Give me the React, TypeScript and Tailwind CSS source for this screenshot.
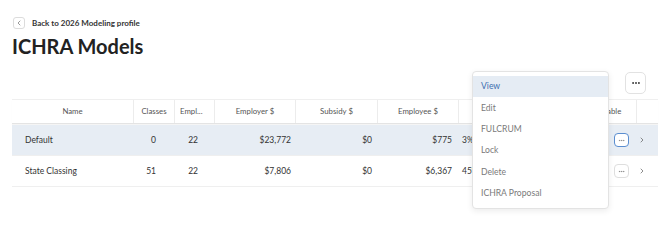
import React from 'react';
import { ChevronLeft, ChevronRight, MoreHorizontal } from 'lucide-react';

const cols = 'grid grid-cols-[121px_41px_40px_81px_82px_81px_60px_60px_58px_22px]';

const headers = [
  { label: 'Name', align: 'text-center' },
  { label: 'Classes', align: 'text-center' },
  { label: 'Empl...', align: 'text-left pl-[5px]' },
  { label: 'Employer $', align: 'text-center' },
  { label: 'Subsidy $', align: 'text-center' },
  { label: 'Employee $', align: 'text-center' },
  { label: 'EE %', align: 'text-center' },
  { label: 'Status', align: 'text-center' },
  { label: 'Editable', align: 'text-center' },
  { label: '', align: '' },
];

const rows = [
  { name: 'Default', classes: '0', empl: '22', employer: '$23,772', subsidy: '$0', employee: '$775', pct: '3%', active: true },
  { name: 'State Classing', classes: '51', empl: '22', employer: '$7,806', subsidy: '$0', employee: '$6,367', pct: '45%', active: false },
];

const menuItems = ['View', 'Edit', 'FULCRUM', 'Lock', 'Delete', 'ICHRA Proposal'];

export default function App() {
  return (
    <div className="relative w-[670px] h-[244px] bg-white px-3 pt-[17px] text-[#333]" style={{ fontFamily: 'Lato, "Noto Sans", sans-serif' }}>
      {/* Back link */}
      <div className="flex items-center gap-[7px]">
        <button className="h-3 w-3 ml-px flex items-center justify-center rounded-[3px] border border-[#dcdcdc] bg-white text-[#666]">
          <ChevronLeft size={8} strokeWidth={2} />
        </button>
        <span className="text-[8px] font-bold text-[#333]">Back to 2026 Modeling profile</span>
      </div>

      <h1 className="mt-[4px] text-[20px] leading-[26px] font-bold text-[#222]">ICHRA Models</h1>

      <div className="flex justify-end mt-[13px] pr-[12px]">
        <button className="h-[22px] w-[21px] flex items-center justify-center rounded-[5px] border border-[#e2e2e2] bg-white text-[#333]">
          <MoreHorizontal size={10} strokeWidth={2.5} />
        </button>
      </div>

      {/* Table */}
      <div className="mt-[5px] w-[646px] border-t border-[#efefef] text-[8.5px]">
        <div className={`${cols} h-[24px] border-b border-[#e4e4e4] shadow-[0_1px_1px_rgba(0,0,0,0.04)] text-[7.8px] text-[#555]`}>
          {headers.map((h, i) => (
            <div key={i} className={`flex items-center ${i > 0 ? 'border-l border-[#ececec]' : ''} ${h.align === 'text-center' ? 'justify-center' : 'pl-[5px]'}`}>
              {h.label}
            </div>
          ))}
        </div>
        {rows.map((r) => (
          <div key={r.name} className={`${cols} h-[31px] items-center border-b border-[#efefef] ${r.active ? 'bg-[#e7edf4] mt-[1px]' : 'bg-white'}`}>
            <div className="pl-[13px]">{r.name}</div>
            <div className="text-right pr-[18px]">{r.classes}</div>
            <div className="text-right pr-[16px]">{r.empl}</div>
            <div className="text-right pr-[4px]">{r.employer}</div>
            <div className="text-right pr-[5px]">{r.subsidy}</div>
            <div className="text-right pr-[6px]">{r.employee}</div>
            <div className="pl-[4px]">{r.pct}</div>
            <div />
            <div className="flex justify-end pr-[7px]">
              <button className={`h-[14px] w-[15px] flex items-center justify-center rounded-[4px] bg-white text-[#777] border ${r.active ? 'border-[#5b8ed0]' : 'border-[#dedede]'}`}>
                <MoreHorizontal size={7} strokeWidth={2} />
              </button>
            </div>
            <div className="flex items-center pl-[2px] text-[#555]">
              <ChevronRight size={8} strokeWidth={2} />
            </div>
          </div>
        ))}
      </div>

      {/* Dropdown menu */}
      <div className="absolute left-[472px] top-[71px] w-[137px] rounded-[4px] border border-[#e3e3e3] bg-white pt-[4px] pb-[4px] shadow-[0_2px_6px_rgba(0,0,0,0.08)]">
        {menuItems.map((m, i) => (
          <div key={m} className={`h-[21.4px] flex items-center pl-[8px] text-[8.6px] ${i === 0 ? 'bg-[#e5ecf4] text-[#3d6fb0]' : 'text-[#7a7a7a]'}`}>
            {m}
          </div>
        ))}
      </div>
    </div>
  );
}
